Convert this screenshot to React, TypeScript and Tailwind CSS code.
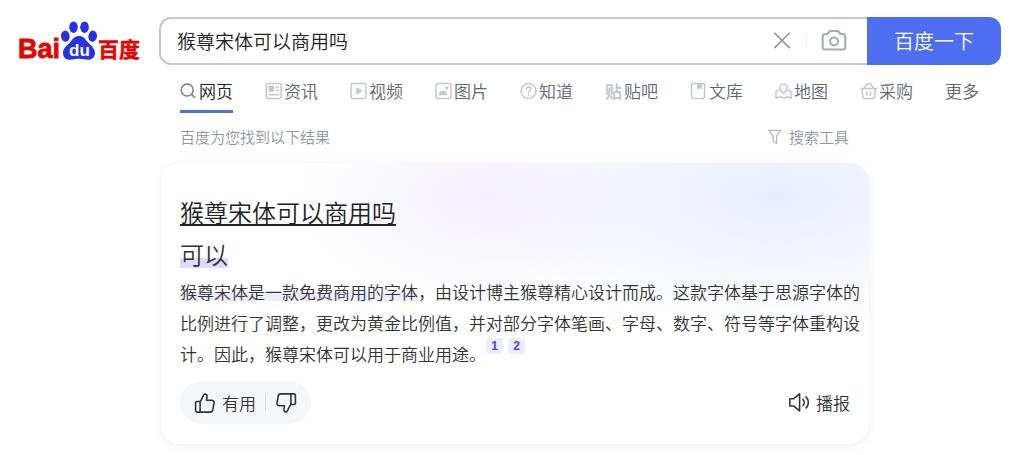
import React from "react";
import clsx from "clsx";

interface Tab {
  label: string;
  icon?: React.ReactNode;
}

const Icon: React.FC<{ children: React.ReactNode; className?: string }> = ({
  children,
  className = "h-[18px] w-[18px]",
}) => (
  <svg
    viewBox="0 0 18 18"
    fill="none"
    stroke="currentColor"
    strokeWidth="1.5"
    strokeLinecap="round"
    strokeLinejoin="round"
    aria-hidden="true"
    className={clsx("shrink-0", className)}
  >
    {children}
  </svg>
);

const tabs: Tab[] = [
  {
    label: "网页",
    icon: (
      <Icon>
        <circle cx="7.2" cy="8" r="6" />
        <path d="M11.6 12.4l3 3" />
      </Icon>
    ),
  },
  {
    label: "资讯",
    icon: (
      <Icon>
        <rect x="1.2" y="1.5" width="15" height="15" rx="2" />
        <rect x="4.2" y="4.5" width="4.2" height="4.5" fill="currentColor" />
        <path d="M11 5h2.5M11 8.5h2.5M4.2 12.8h9.3" />
      </Icon>
    ),
  },
  {
    label: "视频",
    icon: (
      <Icon>
        <rect x="1" y="1.5" width="15" height="15" rx="2" />
        <path d="M7 6.5v5l4-2.5z" fill="currentColor" />
      </Icon>
    ),
  },
  {
    label: "图片",
    icon: (
      <Icon>
        <rect x="1" y="1.5" width="15" height="15" rx="2.5" />
        <path d="M4.5 12.5c0-2.5 2-4 3.5-2.5 1.5-1 3.5 0 3.5 2.5z" fill="currentColor" />
        <circle cx="12" cy="5.8" r="0.9" fill="currentColor" />
      </Icon>
    ),
  },
  {
    label: "知道",
    icon: (
      <Icon>
        <circle cx="8.5" cy="9" r="7.5" />
        <path d="M6.3 7.2c0-3 4.6-3 4.6 0 0 1.7-2.3 1.7-2.3 3.4M8.6 12.8v.2" />
      </Icon>
    ),
  },
  {
    label: "贴吧",
    icon: (
      <span aria-hidden="true" className="w-[18px] text-[17px] font-bold">
        贴
      </span>
    ),
  },
  {
    label: "文库",
    icon: (
      <Icon>
        <rect x="1.5" y="1.5" width="13" height="15" rx="2" />
        <path d="M7.5 2v5l2-1.3 2 1.3V2z" fill="currentColor" strokeWidth="0.8" />
      </Icon>
    ),
  },
  {
    label: "地图",
    icon: (
      <Icon>
        <path d="M8.5 11.5C6 9.5 4.8 7.8 4.8 5.8a3.7 3.7 0 017.4 0c0 2-1.2 3.7-3.7 5.7z" />
        <path d="M3.7 8.2L1 9.4v6.9l4.2-1.5 3.6 1.5 3.6-1.5 3.6 1.5V9.5l-2.7-1.3" />
      </Icon>
    ),
  },
  {
    label: "采购",
    icon: (
      <Icon>
        <path d="M1 6.5h15.5M4 6.5C5.5 3.5 7 1.8 8.7 1.8s3.3 1.7 4.8 4.7M2 6.5l.8 7.8c.1 1.4.8 2.2 2.2 2.2h7.5c1.4 0 2.1-.8 2.2-2.2l.8-7.8M7 10v3.3M10.5 10v3.3" />
      </Icon>
    ),
  },
  { label: "更多" },
];

const Logo: React.FC = () => (
  <a href="#" aria-label="百度" className="mt-1 ml-[17px] block shrink-0">
    <svg viewBox="0 0 124 42" className="h-[42px] w-[124px] font-bold">
      <text
        x="1"
        y="37"
        fill="#e10602"
        stroke="#e10602"
        strokeWidth="0.8"
        className="font-['Liberation_Sans',sans-serif] text-[27px]"
      >
        Bai
      </text>
      <g fill="#2932e1">
        <ellipse cx="48.3" cy="15.2" rx="4.3" ry="5.6" transform="rotate(-8 48.3 15.2)" />
        <ellipse cx="56.5" cy="6.2" rx="4.3" ry="5.8" />
        <ellipse cx="67.5" cy="6.2" rx="4.3" ry="5.8" />
        <ellipse cx="75.7" cy="15.2" rx="4.3" ry="5.6" transform="rotate(8 75.7 15.2)" />
        <path d="M62 15c4 0 6 2.5 8 5.3 2.5 3.6 8 6 8 11.7 0 4.5-3 6.8-7 6.8-3 0-5-1-9-1s-6 1-9 1c-4.5 0-7-2.5-7-7 0-5.5 5.5-8 8-11.5 2-2.8 4-5.3 8-5.3z" />
      </g>
      <text x="52" y="35" fill="#fff" className="font-['Liberation_Sans',sans-serif] text-[17px]">
        du
      </text>
      <text
        x="81"
        y="36"
        fill="#e10602"
        stroke="#e10602"
        strokeWidth="0.5"
        className="font-['Noto_Sans_CJK_SC',sans-serif] text-[21px]"
      >
        百度
      </text>
    </svg>
  </a>
);

const SearchBar: React.FC = () => (
  <form className="flex h-12 min-w-0 flex-1" onSubmit={(e) => e.preventDefault()}>
    <div className="flex min-w-0 flex-1 items-center rounded-l-xl border-2 border-r-0 border-[#c4c7ce] bg-white pr-5 pl-4">
      <input
        type="text"
        aria-label="搜索"
        defaultValue="猴尊宋体可以商用吗"
        className="min-w-0 flex-1 text-[19px] text-[#222] outline-none"
      />
      <button type="button" aria-label="清除" className="text-[#9195a3]">
        <Icon className="h-5 w-5">
          <path d="M2.5 2l13 13M15.5 2l-13 13" />
        </Icon>
      </button>
      <span className="mx-3.5 h-4 w-px bg-[#f0f0f2]" />
      <button type="button" aria-label="按图片搜索" className="text-[#a7aab5]">
        <svg
          viewBox="0 0 26 24"
          fill="none"
          stroke="currentColor"
          strokeWidth="2"
          strokeLinejoin="round"
          className="h-6 w-[26px]"
        >
          <path d="M9 2h8l2.5 3h2.3c1.5 0 2.5 1 2.5 2.5V18c0 1.500-1 2.500-2.500 2.500H4.200c-1.500 0-2.500-1-2.500-2.500V7.500C1.700 6 2.700 5 4.200 5h2.300z" />
          <circle cx="13" cy="12.5" r="4" />
        </svg>
      </button>
    </div>
    <button type="submit" className="w-[134px] shrink-0 rounded-r-xl bg-[#4e6ef2] text-xl text-white">
      百度一下
    </button>
  </form>
);

const TabBar: React.FC = () => (
  <nav className="ml-[180px] flex gap-8 pt-3 text-[17px] leading-7 whitespace-nowrap text-[#626675]">
    {tabs.map((tab, i) => (
      <a
        key={tab.label}
        href="#"
        className={clsx(
          "flex items-center border-b-[3px] pb-[5px]",
          i === 0 ? "border-[#4e6ef2] text-[#222]" : "border-transparent",
        )}
      >
        {tab.icon && (
          <span className={clsx("mr-px flex", i === 0 ? "text-[#7b7f8d]" : "text-[#c4c7ce]")}>
            {tab.icon}
          </span>
        )}
        {tab.label}
      </a>
    ))}
  </nav>
);

const Cite: React.FC<{ n: number }> = ({ n }) => (
  <a
    href="#"
    className="mr-[5px] inline-block h-4 w-[17px] rounded bg-[#eeecff] text-center align-[11px] font-['Liberation_Sans',sans-serif] text-xs leading-4 font-bold text-[#4e3ff5]"
  >
    {n}
  </a>
);

const AnswerCard: React.FC = () => (
  <article className="rounded-[20px] bg-white bg-[radial-gradient(ellipse_190px_110px_at_46%_12%,#f3effe,transparent),radial-gradient(ellipse_310px_130px_at_87%_12%,#e8ecfd,transparent)] pt-[31px] pb-5 pl-[19px] shadow-[0_2px_10px_rgba(0,0,0,0.07)]">
    <h2 className="text-2xl leading-9 text-[#222]">
      <a href="#" className="underline decoration-2 underline-offset-2">
        猴尊宋体可以商用吗
      </a>
    </h2>
    <p className="mt-1.5 text-2xl leading-9 text-[#333]">
      <span className="rounded bg-[linear-gradient(transparent_62%,#dfdbff_62%,#dfdbff_92%,transparent_92%)]">
        可以
      </span>
    </p>
    <p className="mt-1 text-[17px] leading-[31px] text-[#333]">
      <span className="bg-[linear-gradient(transparent_50%,#eeecff_50%,#eeecff_90%,transparent_90%)]">
        猴尊宋体是一款免费商用的字体
      </span>
      ，由设计博主猴尊精心设计而成。这款字体基于思源字体的比例进行了调整，更改为黄金比例值，并对部分字体笔画、字母、数字、符号等字体重构设计。因此，猴尊宋体可以用于商业用途。
      <Cite n={1} />
      <Cite n={2} />
    </p>
    <div className="mt-3 mr-[19px] flex items-center justify-between text-[17px] text-[#333]">
      <div className="flex h-[43px] items-center rounded-full bg-[#f5f6fa] px-3.5">
        <button type="button" className="flex items-center gap-1.5">
          <Icon className="h-[22px] w-[22px]">
            <path
              d="M5 8.2L8.3 1.8c1.6-.4 2.7.7 2.4 2.2L10.2 6.7h4.3c1.3 0 2.1 1 1.9 2.2l-1 5.8c-.2 1.1-1 1.8-2.1 1.8H2.8c-.9 0-1.5-.6-1.5-1.5V8.8c0-.6.4-1 1-1H5zM5 8v8.3"
              strokeWidth="1.3"
            />
          </Icon>
          有用
        </button>
        <span className="mx-[9px] h-[17px] w-px bg-[#dcdde3]" />
        <button type="button" aria-label="没用">
          <Icon className="h-[22px] w-[22px]">
            <path
              d="M13 9.8l-3.3 6.4c-1.6.4-2.7-.7-2.4-2.2l.5-2.7H3.5c-1.3 0-2.1-1-1.9-2.2l1-5.8c.2-1.1 1-1.8 2.1-1.8h10.5c.9 0 1.5.6 1.5 1.5v6.2c0 .6-.4 1-1 1H13zM13 10V1.7"
              strokeWidth="1.3"
            />
          </Icon>
        </button>
      </div>
      <button type="button" className="flex items-center gap-1.5">
        <Icon className="h-[22px] w-[22px]">
          <path
            d="M1.5 5.5h3.2L9.5 1.5v14l-4.8-4H1.5zM12.2 6c1.4 1.4 1.4 3.600 0 5M14.800 4c2.500 2.600 2.500 6.400 0 9"
            strokeWidth="1.3"
          />
        </Icon>
        播报
      </button>
    </div>
  </article>
);

const App: React.FC = () => {
  return (
    <div className="overflow-hidden bg-white pb-2.5 font-['Noto_Sans_CJK_SC',sans-serif] font-[350]">
      <header className="pt-[17px]">
        <div className="flex gap-[18px] pr-[23px]">
          <Logo />
          <SearchBar />
        </div>
        <TabBar />
      </header>
      <main className="ml-[161px] max-w-[708px]">
        <div className="flex items-center justify-between pt-3 pr-5 pb-3.5 pl-[19px] text-[15px] leading-6 text-[#9195a3]">
          <span>百度为您找到以下结果</span>
          <button type="button" className="flex items-center gap-1.5">
            <Icon className="h-4 w-4 text-[#b5b8c1]">
              <path d="M2 1.5h13.5L10.8 8v8.3l-4-2.5V8z" />
            </Icon>
            搜索工具
          </button>
        </div>
        <AnswerCard />
      </main>
    </div>
  );
};

export default App;
